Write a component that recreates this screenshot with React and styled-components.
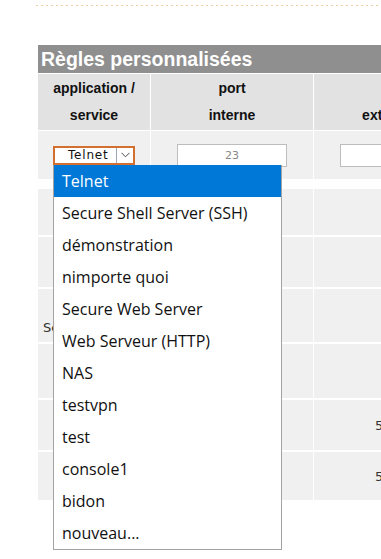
import React from 'react';
import styled, { createGlobalStyle } from 'styled-components';

const GlobalStyle = createGlobalStyle`
  html, body {
    margin: 0;
    padding: 0;
    background: #fff;
    overflow: hidden;
  }
  body {
    font-family: "DejaVu Sans", Verdana, sans-serif;
    color: #222;
  }
`;

const services = [
  'Telnet',
  'Secure Shell Server (SSH)',
  'démonstration',
  'nimporte quoi',
  'Secure Web Server',
  'Web Serveur (HTTP)',
  'NAS',
  'testvpn',
  'test',
  'console1',
  'bidon',
  'nouveau...',
];

const headers = [
  ['application /', 'service'],
  ['port', 'interne'],
  ['\u00a0', 'externe'],
];

const rules = [
  { h: 46 },
  { h: 50 },
  { h: 53, name: 'Secure Web Server' },
  { h: 54 },
  { h: 50, ext: '5060' },
  { h: 48, ext: '5061' },
];

function ChevronDown() {
  return (
    <svg width="9" height="6" viewBox="0 0 9 6">
      <path d="M0.5 0.8 L4.5 4.8 L8.5 0.8" fill="none" stroke="#4a4a4a" strokeWidth="1" />
    </svg>
  );
}

export default function App() {
  return (
    <>
      <GlobalStyle />
      <Page>
        <DottedRule />
        <Rules>
          <Caption>Règles personnalisées</Caption>
          <HeadRow>
            {headers.map((lines, i) => (
              <HeadCell key={i}>
                {lines.map((l, j) => (
                  <div key={j}>{l}</div>
                ))}
              </HeadCell>
            ))}
          </HeadRow>

          <Row $h={48} $gap={1}>
            <Cell>
              <SelectBox>
                <SelectValue>Telnet</SelectValue>
                <SelectArrow>
                  <ChevronDown />
                </SelectArrow>
                <Dropdown>
                  {services.map((s, i) => (
                    <Option key={s} $active={i === 0}>
                      {s}
                    </Option>
                  ))}
                </Dropdown>
              </SelectBox>
            </Cell>
            <Cell>
              <PortInput defaultValue="23" />
            </Cell>
            <Cell>
              <PortInput defaultValue="" />
            </Cell>
          </Row>

          {rules.map((r, i) => (
            <Row key={i} $h={r.h} $gap={i === 0 ? 10 : 2}>
              <Cell $bottom={!!r.name}>{r.name && <Name>{r.name}</Name>}</Cell>
              <Cell />
              <Cell>{r.ext && <Ext>{r.ext}</Ext>}</Cell>
            </Row>
          ))}
        </Rules>
      </Page>
    </>
  );
}

const Page = styled.div`
  width: 381px;
  height: 559px;
  padding-top: 5px;
  box-sizing: border-box;
`;

const DottedRule = styled.div`
  margin-left: 36px;
  height: 1px;
  background-image: linear-gradient(to right, #f2cfa2 2px, transparent 2px);
  background-size: 5px 1px;
  background-repeat: repeat-x;
`;

const Rules = styled.div`
  margin: 39px 0 0 38px;
  width: 420px;
  display: flex;
  flex-direction: column;
`;

const Caption = styled.div`
  height: 28px;
  line-height: 29px;
  padding-left: 3px;
  background: #8f8f8f;
  color: #fff;
  font-family: "Liberation Sans", Arial, sans-serif;
  font-weight: bold;
  font-size: 19.5px;
`;

const grid = `
  display: grid;
  grid-template-columns: 112px 162px 146px;
  column-gap: 1px;
`;

const HeadRow = styled.div`
  ${grid}
  margin-top: 1px;
  height: 56px;
`;

const HeadCell = styled.div`
  background: #e2e2e2;
  display: flex;
  flex-direction: column;
  justify-content: center;
  align-items: center;
  font-family: "Liberation Sans", Arial, sans-serif;
  font-weight: bold;
  font-size: 14px;
  line-height: 27px;
  color: #111;
`;

const Row = styled.div`
  ${grid}
  height: ${(p) => p.$h}px;
  margin-top: ${(p) => p.$gap}px;
`;

const Cell = styled.div`
  background: #f0f0f0;
  display: flex;
  align-items: ${(p) => (p.$bottom ? 'flex-end' : 'center')};
  padding-bottom: ${(p) => (p.$bottom ? '6px' : '0')};
  box-sizing: border-box;
  position: relative;
`;

const Name = styled.span`
  padding-left: 5px;
  font-family: "DejaVu Sans", Verdana, sans-serif;
  font-size: 13px;
  line-height: 16px;
  color: #333;
  white-space: nowrap;
`;

const Ext = styled.span`
  padding-left: 61px;
  font-size: 13px;
  color: #333;
`;

const SelectBox = styled.div`
  position: relative;
  margin-left: 15px;
  width: 82px;
  height: 19px;
  box-sizing: border-box;
  border: 2px solid #d3702f;
  background: #fff;
  display: flex;
  align-items: stretch;
`;

const SelectValue = styled.div`
  flex: 1;
  padding-left: 13px;
  font-size: 12px;
  letter-spacing: 0.8px;
  line-height: 15px;
  color: #111;
  border-right: 1px solid #9aa6b4;
`;

const SelectArrow = styled.div`
  width: 16px;
  display: flex;
  align-items: center;
  justify-content: center;
`;

const Dropdown = styled.ul`
  position: absolute;
  z-index: 10;
  top: 17px;
  left: -2px;
  width: 229px;
  margin: 0;
  padding: 0;
  list-style: none;
  background: #fff;
  border: 1px solid #a3a3a3;
  border-top: none;
  box-sizing: border-box;
`;

const Option = styled.li`
  height: 32px;
  line-height: 32px;
  padding-left: 8px;
  font-family: "Open Sans", "Noto Sans", sans-serif;
  font-size: 16px;
  color: ${(p) => (p.$active ? '#fff' : '#111')};
  background: ${(p) => (p.$active ? '#0078d7' : 'transparent')};
  white-space: nowrap;
`;

const PortInput = styled.input`
  margin-left: 26px;
  width: 110px;
  height: 23px;
  box-sizing: border-box;
  border: 1px solid #bdbdbd;
  background: #fff;
  padding: 0;
  text-align: center;
  font-family: "DejaVu Sans", Verdana, sans-serif;
  font-size: 11px;
  color: #888;
  outline: none;
`;
